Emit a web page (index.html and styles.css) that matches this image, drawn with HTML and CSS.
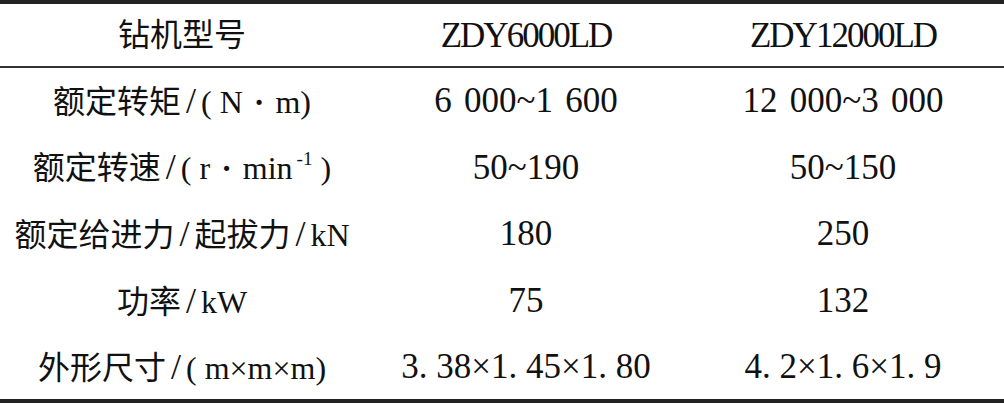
FILE: index.html
```html
<!DOCTYPE html>
<html lang="zh-CN">
<head>
    <meta charset="UTF-8">
    <title>钻机型号参数</title>
    <link rel="stylesheet" href="styles.css">
</head>
<body>
    <table class="spec-table">
        <colgroup>
            <col class="col-name">
            <col class="col-a">
            <col class="col-b">
        </colgroup>
        <thead>
            <tr>
                <th>钻机型号</th>
                <th class="num model">ZDY6000LD</th>
                <th class="num model last">ZDY12000LD</th>
            </tr>
        </thead>
        <tbody>
            <tr>
                <td>额定转矩<span class="slash">/</span>( N <span class="dot">·</span> m)</td>
                <td class="num gap">6 000~1 600</td>
                <td class="num gap last">12 000~3 000</td>
            </tr>
            <tr>
                <td>额定转速<span class="slash">/</span>( r <span class="dot">·</span> min<sup>-1</sup> )</td>
                <td class="num">50~190</td>
                <td class="num last">50~150</td>
            </tr>
            <tr>
                <td>额定给进力<span class="slash">/</span>起拔力<span class="slash">/</span>kN</td>
                <td class="num">180</td>
                <td class="num last">250</td>
            </tr>
            <tr>
                <td>功率<span class="slash">/</span>kW</td>
                <td class="num">75</td>
                <td class="num last">132</td>
            </tr>
            <tr>
                <td>外形尺寸<span class="slash">/</span>( m×m×m)</td>
                <td class="num">3. 38×1. 45×1. 80</td>
                <td class="num last">4. 2×1. 6×1. 9</td>
            </tr>
        </tbody>
    </table>
</body>
</html>
```

FILE: styles.css
```css
* {
    margin: 0;
    padding: 0;
    box-sizing: border-box;
}

body {
    background: #fff;
    color: #111;
    font-family: 'Liberation Serif', 'Noto Sans CJK SC', serif;
}

.spec-table {
    width: 1004px;
    table-layout: fixed;
    border-collapse: collapse;
    border-top: 4px solid #222;
    border-bottom: 4px solid #222;
}

.col-name { width: 364px; }
.col-a { width: 324px; }
.col-b { width: 316px; }

th, td {
    text-align: center;
    font-weight: normal;
    font-size: 32px;
    line-height: 1;
    white-space: nowrap;
}

thead th {
    height: 65px;
    border-bottom: 2px solid #333;
}

tbody td {
    height: 66.8px;
}

.num {
    font-family: 'Liberation Serif', serif;
    font-size: 35px;
}

.model {
    letter-spacing: -2px;
}

.gap {
    word-spacing: 0.1em;
}

.last {
    padding-right: 6px;
}

.slash {
    font-size: 36px;
    margin: 0 5px;
}

.dot {
    font-weight: bold;
    margin: 0 3px;
}

sup {
    font-size: 0.6em;
    vertical-align: 0.75em;
    line-height: 0;
    margin-left: 4px;
}
```
